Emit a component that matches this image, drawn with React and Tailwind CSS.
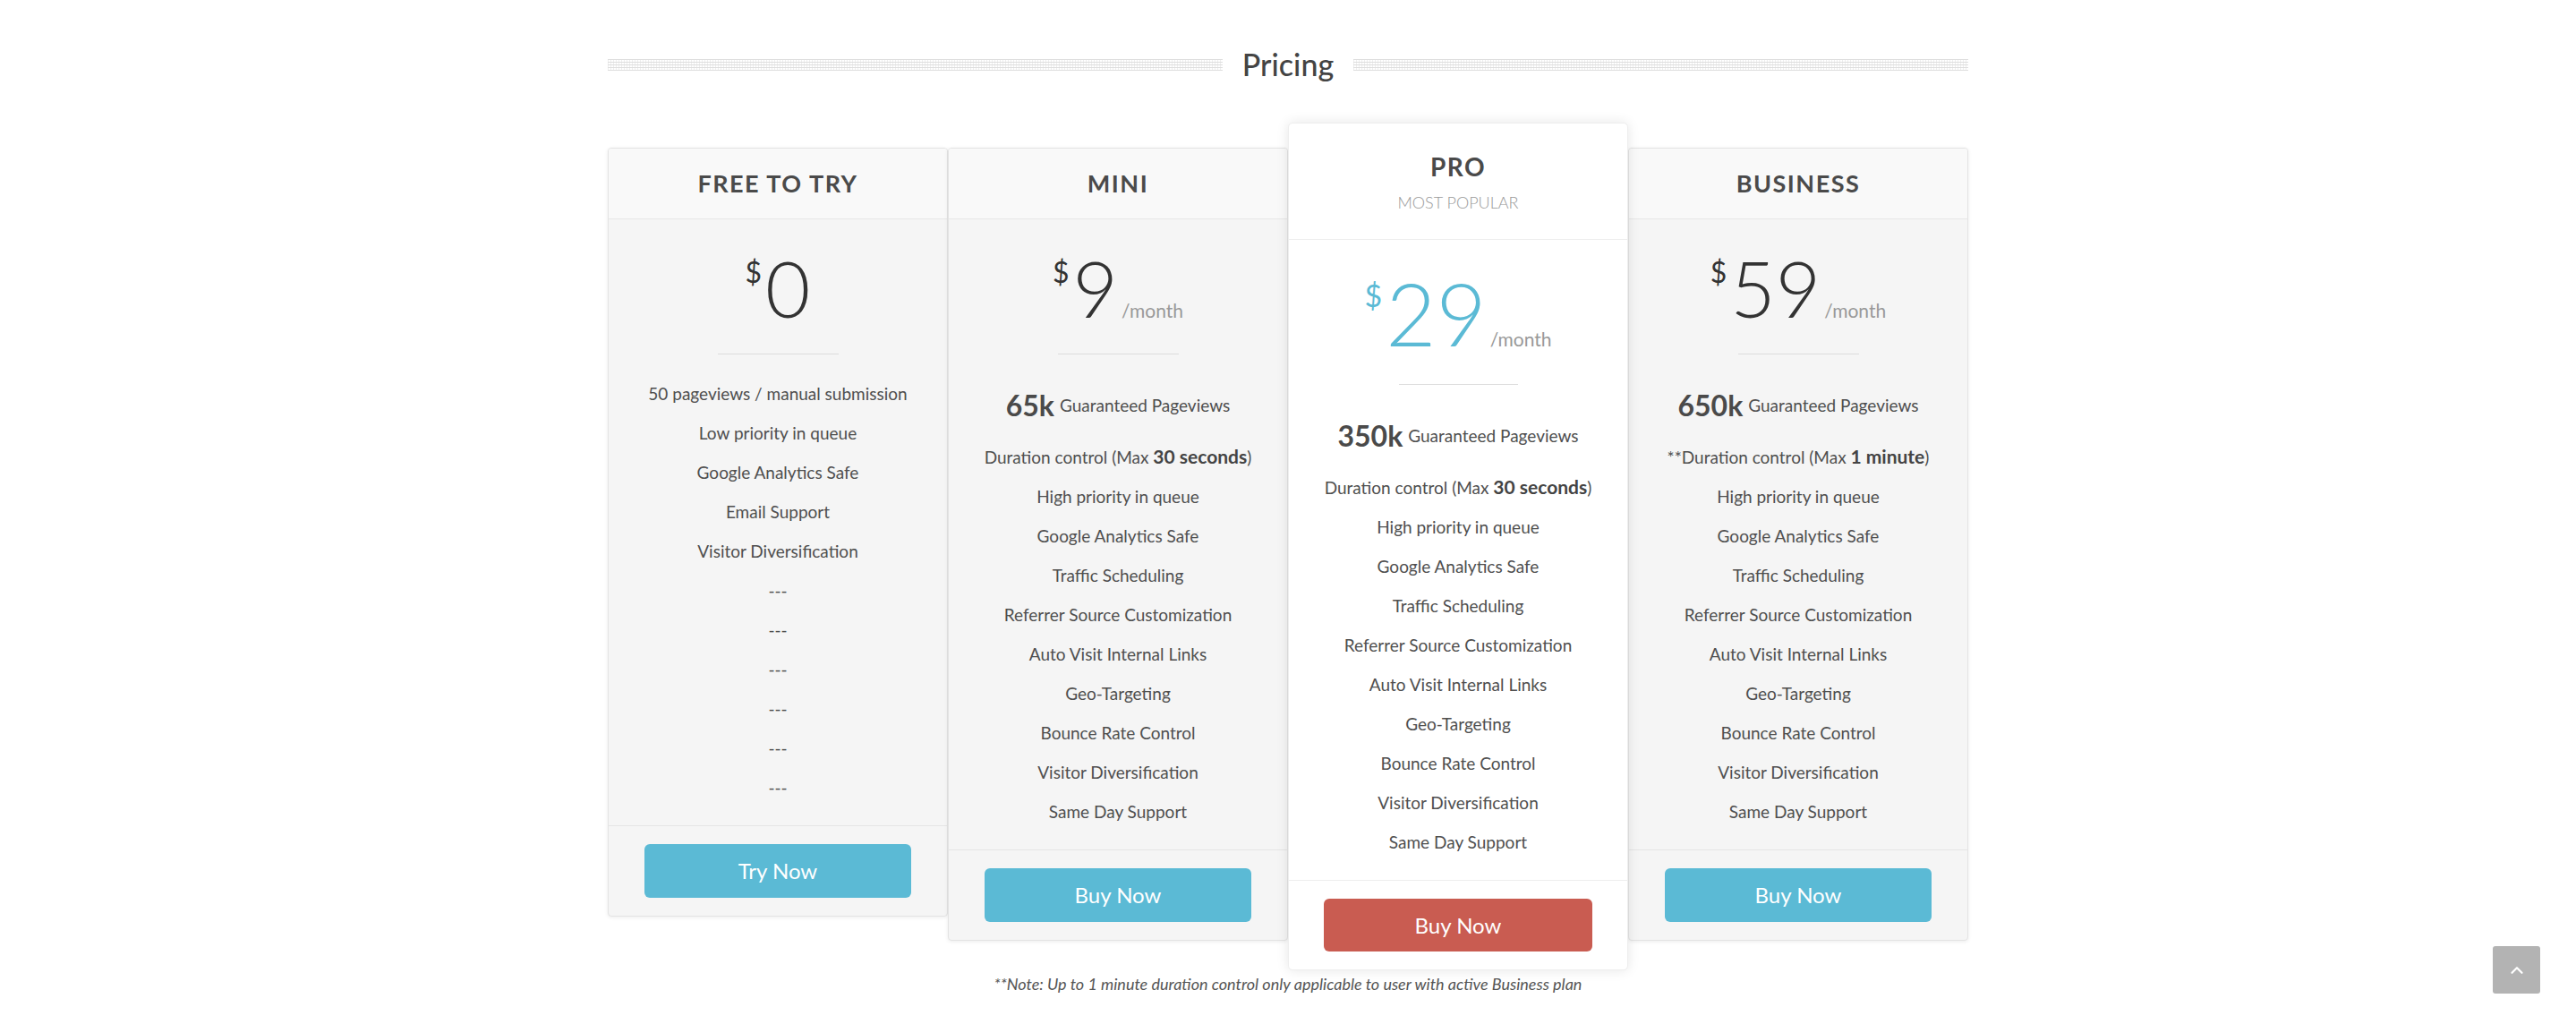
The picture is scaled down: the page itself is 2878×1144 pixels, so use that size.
import React from 'react';
import { ChevronUp } from 'lucide-react';

const common = [
  'High priority in queue',
  'Google Analytics Safe',
  'Traffic Scheduling',
  'Referrer Source Customization',
  'Auto Visit Internal Links',
  'Geo-Targeting',
  'Bounce Rate Control',
  'Visitor Diversification',
  'Same Day Support',
];

const plans = [
  {
    name: 'FREE TO TRY',
    price: '0',
    button: 'Try Now',
    features: [
      '50 pageviews / manual submission',
      'Low priority in queue',
      'Google Analytics Safe',
      'Email Support',
      'Visitor Diversification',
      '---',
      '---',
      '---',
      '---',
      '---',
      '---',
    ],
  },
  {
    name: 'MINI',
    price: '9',
    month: true,
    button: 'Buy Now',
    views: '65k',
    duration: { pre: 'Duration control (Max ', bold: '30 seconds' },
    features: common,
  },
  {
    name: 'PRO',
    price: '29',
    month: true,
    pro: true,
    button: 'Buy Now',
    views: '350k',
    duration: { pre: 'Duration control (Max ', bold: '30 seconds' },
    features: common,
  },
  {
    name: 'BUSINESS',
    price: '59',
    month: true,
    button: 'Buy Now',
    views: '650k',
    duration: { pre: '**Duration control (Max ', bold: '1 minute' },
    features: common,
  },
];

const Price = ({ plan }) => (
  <div className="flex justify-center items-baseline">
    <span
      className={
        plan.pro
          ? 'self-start mt-[12px] text-[34px] leading-none text-[#5bbad5]'
          : 'self-start mt-[10px] text-[32px] leading-none text-[#333]'
      }
    >
      $
    </span>
    <span
      className={
        plan.pro
          ? 'ml-[4px] text-[97px] leading-none font-light text-[#5bbad5]'
          : 'ml-[4px] text-[87px] leading-none font-light text-[#333]'
      }
    >
      {plan.price}
    </span>
    {plan.month && <span className="ml-[4px] text-[21px] leading-none text-[#999]">/month</span>}
  </div>
);

const FeatureList = ({ plan }) => (
  <ul className="mt-[22px] text-center text-[19px] text-[#4f4f4f]">
    {plan.views && (
      <li className="h-[70px] flex items-center justify-center gap-[6px]">
        <span className="text-[32px] font-bold text-[#4a4a4a]">{plan.views}</span>
        <span>Guaranteed Pageviews</span>
      </li>
    )}
    {plan.duration && (
      <li className="leading-[44px]">
        {plan.duration.pre}
        <span className="text-[21px] font-bold text-[#444]">{plan.duration.bold}</span>)
      </li>
    )}
    {plan.features.map((f, i) => (
      <li key={i} className="leading-[44px]">
        {f}
      </li>
    ))}
  </ul>
);

const PlanCard = ({ plan }) => {
  if (plan.pro) {
    return (
      <div className="relative z-10 w-[380px] bg-white border border-[#eeeeee] rounded-[5px] shadow-[0_0_14px_rgba(0,0,0,0.1)]">
        <div className="pt-[30px] pb-[29px] border-b border-[#eeeeee] text-center">
          <h3 className="text-[28px] leading-[36px] font-bold tracking-[1.5px] text-[#4a4a4a]">{plan.name}</h3>
          <p className="mt-[10px] text-[18px] leading-[24px] font-light text-[#999]">MOST POPULAR</p>
        </div>
        <div className="pt-[33px] pb-5">
          <Price plan={plan} />
          <div className="mx-auto mt-[31px] w-[133px] h-px bg-[#dddddd]" />
          <FeatureList plan={plan} />
        </div>
        <div className="border-t border-[#eeeeee] py-5 flex justify-center">
          <button className="w-[300px] h-[59px] rounded-[6px] bg-[#c95c51] text-white text-[24px]">{plan.button}</button>
        </div>
      </div>
    );
  }
  return (
    <div className="mt-[28px] w-[380px] bg-[#f5f5f5] border border-[#e4e4e4] rounded-[4px] shadow-[0_1px_4px_rgba(0,0,0,0.08)] overflow-hidden">
      <div className="h-[79px] flex items-center justify-center bg-[#f9f9f9] border-b border-[#e8e8e8]">
        <h3 className="text-[27px] font-bold tracking-[1.5px] text-[#4a4a4a]">{plan.name}</h3>
      </div>
      <div className="pt-[33px] pb-5">
        <Price plan={plan} />
        <div className="mx-auto mt-[30px] w-[135px] h-px bg-[#dcdcdc]" />
        <FeatureList plan={plan} />
      </div>
      <div className="border-t border-[#e5e5e5] py-5 flex justify-center">
        <button className="w-[298px] h-[60px] rounded-[6px] bg-[#5bbad5] text-white text-[24px]">{plan.button}</button>
      </div>
    </div>
  );
};

export default function App() {
  return (
    <div className="relative min-h-[1144px] bg-white font-[Lato,sans-serif] pt-[52px]">
      <div className="mx-auto w-[1520px]">
        <div className="flex items-center gap-[22px]">
          <div className="flex-1 h-[13px] bg-[image:repeating-linear-gradient(0deg,#dedede_0px,#dedede_1px,transparent_1px,transparent_3px),repeating-linear-gradient(90deg,#eeeeee_0px,#eeeeee_1px,transparent_1px,transparent_3px)]" />
          <h2 className="text-[34px] leading-[40px] font-medium text-[#444]">Pricing</h2>
          <div className="flex-1 h-[13px] bg-[image:repeating-linear-gradient(0deg,#dedede_0px,#dedede_1px,transparent_1px,transparent_3px),repeating-linear-gradient(90deg,#eeeeee_0px,#eeeeee_1px,transparent_1px,transparent_3px)]" />
        </div>

        <div className="mt-[45px] flex items-start">
          {plans.map((p) => (
            <PlanCard key={p.name} plan={p} />
          ))}
        </div>

        <p className="mt-[3px] text-center text-[18px] leading-[24px] italic text-[#555]">
          **Note: Up to 1 minute duration control only applicable to user with active Business plan
        </p>
      </div>

      <button className="fixed right-[40px] bottom-[34px] w-[53px] h-[53px] rounded-[3px] bg-[#b3b3b3] flex items-center justify-center text-white">
        <ChevronUp size={22} strokeWidth={2.5} />
      </button>
    </div>
  );
}
